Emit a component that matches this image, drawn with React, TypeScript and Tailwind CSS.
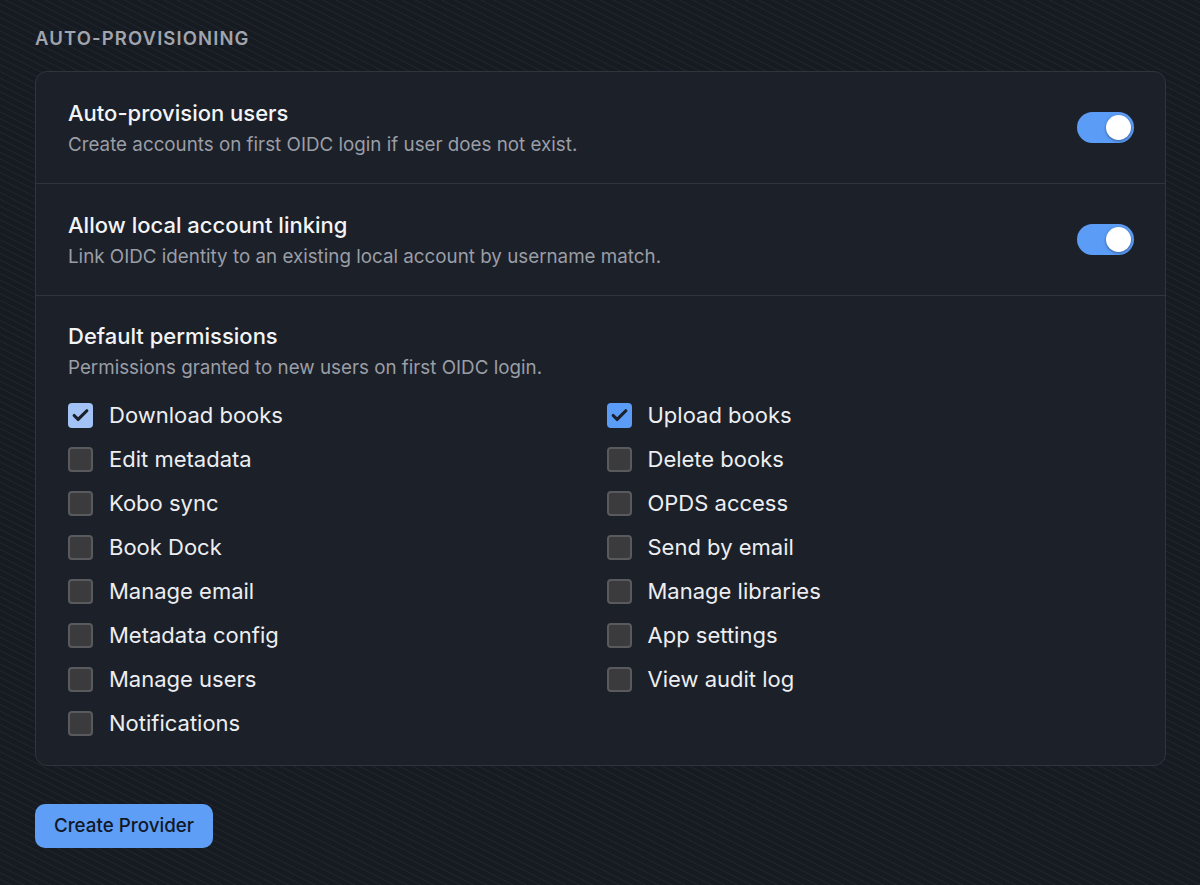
import React from "react";
import { Check } from "lucide-react";

const LEFT = [
  { name: "Download books", on: true, hover: true },
  { name: "Edit metadata", on: false },
  { name: "Kobo sync", on: false },
  { name: "Book Dock", on: false },
  { name: "Manage email", on: false },
  { name: "Metadata config", on: false },
  { name: "Manage users", on: false },
  { name: "Notifications", on: false },
];

const RIGHT = [
  { name: "Upload books", on: true },
  { name: "Delete books", on: false },
  { name: "OPDS access", on: false },
  { name: "Send by email", on: false },
  { name: "Manage libraries", on: false },
  { name: "App settings", on: false },
  { name: "View audit log", on: false },
];

function Toggle() {
  return (
    <div className="flex h-[31px] w-[57px] shrink-0 items-center justify-end rounded-full bg-[#5b9cf6] pr-[3px]">
      <div className="h-[25px] w-[25px] rounded-full bg-white shadow-[0_1px_3px_rgba(0,0,0,0.4)]" />
    </div>
  );
}

function Box({ name, on, hover }: { name: string; on: boolean; hover?: boolean }) {
  return (
    <label className="flex h-[44px] items-center gap-[16px]">
      {on ? (
        <span
          className={
            "flex h-[25px] w-[25px] items-center justify-center rounded-[4px] " +
            (hover ? "bg-[#a3c3f7]" : "bg-[#5b9cf6]")
          }
        >
          <Check className="h-[19px] w-[19px] text-[#1b202a]" strokeWidth={4} />
        </span>
      ) : (
        <span className="h-[25px] w-[25px] rounded-[4px] border-2 border-[#585a5e] bg-[#3b3b3d]" />
      )}
      <span className="text-[22px] text-[#eceef1]">{name}</span>
    </label>
  );
}

function Heading({ title, desc }: { title: string; desc: string }) {
  return (
    <div>
      <div className="text-[22px] font-medium leading-[30px] text-[#f3f4f6]">{title}</div>
      <div className="mt-[4px] text-[18.8px] leading-[26px] text-[#9a9ea6]">{desc}</div>
    </div>
  );
}

export default function App() {
  return (
    <div className="min-h-[885px] w-full bg-[#161a21] bg-[repeating-linear-gradient(27deg,#161a21_0px,#161a21_4px,#20252e_5px,#161a21_6px)] px-[35px] pt-[25px] font-['Inter',sans-serif]">
      <h2 className="text-[18.5px] font-semibold leading-[26px] tracking-[0.06em] text-[#a1a5ad]">AUTO-PROVISIONING</h2>

      <div className="mt-[20px] w-[1131px] rounded-[12px] border border-[#2f343e] bg-[#1c2029]">
        <div className="flex h-[112px] items-center justify-between border-b border-[#2f343e] pl-[32px] pr-[31px]">
          <Heading title="Auto-provision users" desc="Create accounts on first OIDC login if user does not exist." />
          <Toggle />
        </div>

        <div className="flex h-[112px] items-center justify-between border-b border-[#2f343e] pl-[32px] pr-[31px]">
          <Heading
            title="Allow local account linking"
            desc="Link OIDC identity to an existing local account by username match."
          />
          <Toggle />
        </div>

        <div className="px-[32px] pt-[25px] pb-[20px]">
          <Heading title="Default permissions" desc="Permissions granted to new users on first OIDC login." />
          <div className="mt-[12px] grid grid-cols-2 gap-x-[12px]">
            <div className="flex flex-col">
              {LEFT.map((p) => (
                <Box key={p.name} name={p.name} on={p.on} hover={p.hover} />
              ))}
            </div>
            <div className="flex flex-col">
              {RIGHT.map((p) => (
                <Box key={p.name} name={p.name} on={p.on} />
              ))}
            </div>
          </div>
        </div>
      </div>

      <button className="mt-[38px] h-[44px] w-[178px] rounded-[10px] bg-[#5f9ef7] text-[18.8px] font-medium text-[#111827]">
        Create Provider
      </button>
    </div>
  );
}
